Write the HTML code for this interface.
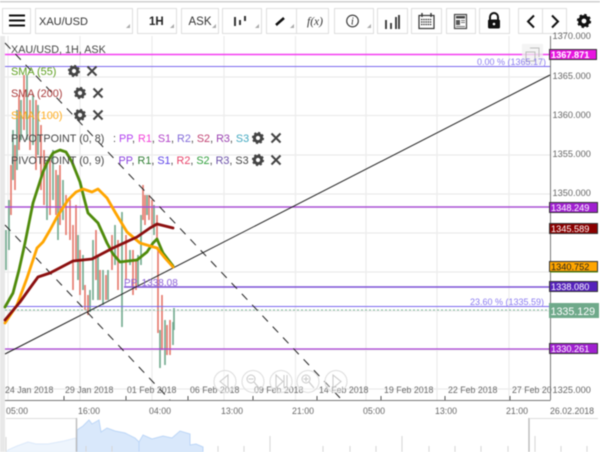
<!DOCTYPE html>
<html><head><meta charset="utf-8"><style>
html,body{margin:0;padding:0;background:#fff;width:600px;height:452px;overflow:hidden}
svg{display:block;font-family:"Liberation Sans",sans-serif;filter:blur(.4px)}
</style></head><body>
<svg width="600" height="452" viewBox="0 0 600 452" xmlns="http://www.w3.org/2000/svg">
<defs>
<g id="gear"><circle r="3.6" fill="none" stroke="#444" stroke-width="3"/><circle r="5.3" fill="none" stroke="#444" stroke-width="1.6" stroke-dasharray="2.1 2.06"/></g>
<g id="x"><path d="M-4.5-4.5L4.5 4.5M4.5-4.5L-4.5 4.5" stroke="#444" stroke-width="2" fill="none"/></g>
</defs>
<rect width="600" height="452" fill="#fff"/>
<rect x="0" y="1" width="600" height="1.5" fill="#cfcfcf"/>
<rect x="0" y="36" width="5" height="416" fill="#e8e8e8"/>

<!-- toolbar -->
<g fill="#fff" stroke="#dedede" stroke-width="1">
<rect x="2.5" y="8.5" width="28" height="25"/><rect x="35.5" y="8.5" width="97" height="25"/><rect x="137.5" y="8.5" width="39" height="25"/><rect x="181.5" y="8.5" width="37" height="25"/><rect x="222.5" y="8.5" width="39" height="25"/><rect x="266.5" y="8.5" width="30" height="25"/><rect x="296.5" y="8.5" width="32" height="25"/><rect x="334.5" y="8.5" width="39" height="25"/><rect x="377.5" y="8.5" width="30" height="25"/><rect x="411.5" y="8.5" width="30" height="25"/><rect x="446.5" y="8.5" width="29" height="25"/><rect x="479.5" y="8.5" width="30" height="25"/><rect x="518.5" y="8.5" width="48" height="25"/><path d="M542.5 8.500V33.500"/>
</g>
<g fill="#aaa"><path d="M130 28v-4l-4 4z"/><path d="M174 28v-4l-4 4z"/><path d="M216 28v-4l-4 4z"/><path d="M259 28v-4l-4 4z"/><path d="M294 28v-4l-4 4z"/><path d="M371 28v-4l-4 4z"/></g>
<path d="M9 15.500H25M9 20.500H25M9 25.500H25" stroke="#111" stroke-width="2" fill="none"/>
<text x="39" y="25" font-size="11" fill="#333">XAU/USD</text>
<text x="149" y="25" font-size="11.500" fill="#222" font-weight="bold">1H</text>
<text x="188.500" y="25" font-size="11.500" fill="#333">ASK</text>
<path d="M235 17v9M240 20v5M245 16v5" stroke="#333" stroke-width="2" fill="none"/>
<path d="M276 25l8-7" stroke="#111" stroke-width="2.500"/>
<text x="307" y="25" font-size="11.500" font-family="Liberation Serif" font-style="italic" fill="#333">f(x)</text>
<circle cx="352.500" cy="21" r="5.800" fill="none" stroke="#333" stroke-width="1.100"/><text x="351" y="24.500" font-size="10" font-family="Liberation Serif" font-style="italic" fill="#222">i</text>
<path d="M386 28v-9M391 28v-6M396 28v-12M399 28v-14" stroke="#333" stroke-width="1.800" fill="none" transform="translate(0,1)"/>
<g fill="none" stroke="#333"><rect x="419" y="15.500" width="15" height="13" stroke-width="1.200"/><path d="M422 13v4M431 13v4" stroke-width="1.400"/><path d="M421 19.500h11M421 22h11M421 24.500h11" stroke-width="1.300" stroke-dasharray="1.500 .7"/></g>
<g><rect x="454.500" y="14.500" width="12" height="14" fill="#fff" stroke="#444" stroke-width="1.200"/><rect x="456" y="16" width="9" height="2.500" fill="#444"/><rect x="456" y="20" width="4" height="5" fill="#555"/><path d="M461 20.500h4M461 22.500h4M456 26.500h9" stroke="#777"/></g>
<path d="M490 20v-3a4 4 0 0 1 8 0v3" fill="none" stroke="#111" stroke-width="2"/><rect x="488" y="19.500" width="12" height="9" rx="1.500" fill="#111"/><circle cx="494" cy="24" r="1.300" fill="#fff"/>
<path d="M534 15.500l-6 6 6 6M552 15.500l6 6-6 6" fill="none" stroke="#111" stroke-width="2"/>
<g transform="translate(584,21) scale(1.150)"><circle r="3.600" fill="none" stroke="#111" stroke-width="3"/><circle r="5.300" fill="none" stroke="#111" stroke-width="1.800" stroke-dasharray="2.100 2.060"/></g>

<!-- grid -->
<g stroke="#ececec" stroke-width="1.200" fill="none">
<path d="M8 36V400M80 36V400M152 36V400M224 36V400M295.500 36V400M366 36V400M437 36V400M509 36V400"/>
<path d="M5 77H550M5 115.500H550M5 155H550M5 194H550M5 233H550M5 272H550M5 311H550M5 350H550M5 389H550"/>
</g>

<!-- candle wicks -->
<path fill="none" stroke="#6fa88c" stroke-width="1.600" d="M6 230V270M9 200V250M13 130V180M17 110V170M21 100V140M27 75V140M33 95V145M38 105V155M47 165V220M53 150V200M58 175V240M63 180V220M78 235V280M83 255V290M90 290V312M93 240V300M98 255V300M103 270V305M108 270V300M115 225V265M122 212V327M130 250V265M138 255V285M141 215V265M147 195V215M154 205V235M160 330V368M165 320V365M173 322V345M174 308V330"/>
<path fill="none" stroke="#e4766a" stroke-width="1.600" d="M11 165V215M15 145V190M19 95V150M24 75V130M30 100V150M36 100V170M41 125V190M44 150V205M50 160V215M56 170V215M60 165V225M66 195V235M70 200V240M73 225V290M76 205V260M80 250V295M85 285V310M88 295V315M96 230V280M100 270V300M106 275V300M112 235V270M118 240V290M126 235V280M133 250V295M136 260V290M143 185V220M145 195V225M149 195V220M152 200V225M157 215V240M158 247V333M162 295V350M167 325V355M170 320V355"/>

<!-- horizontal levels -->
<path d="M5 54.500H550" stroke="#f43df0" stroke-width="1.400"/>
<path d="M5 66.500H550" stroke="#7b68ee" stroke-width="1.100"/>
<path d="M5 207H550" stroke="#a94fd4" stroke-width="1.400"/>
<path d="M124 287H550" stroke="#7a4fd6" stroke-width="1.500"/>
<path d="M5 306.500H550" stroke="#7b68ee" stroke-width="1.100"/>
<path d="M5 310H550" stroke="#7fb79a" stroke-width="1" stroke-dasharray="2 2"/>
<path d="M5 349H550" stroke="#a93fd4" stroke-width="1.200"/>

<!-- trend lines -->
<path d="M5 354L550 75" stroke="#222" stroke-width="1" fill="none"/>
<path d="M5 43L342 400" stroke="#222" stroke-width="1" stroke-dasharray="8 7" fill="none"/>
<path d="M5 225L170 400" stroke="#222" stroke-width="1" stroke-dasharray="8 7" fill="none"/>

<!-- SMAs -->
<polyline fill="none" stroke="#4f8b0b" stroke-width="2.800" stroke-linejoin="round" stroke-linecap="round" points="5,307 13,293 19,270 25,243 33,203 43,172 48,161 53,153 60,150 66,152 72,162 80,182 84,198 88,213 98,223 103,234 107,243 113,254 120,262 128,261 137,260 147,252 153,243 157,239 163,253 173,266"/>
<polyline fill="none" stroke="#ffa500" stroke-width="2.800" stroke-linejoin="round" stroke-linecap="round" points="5,323 17,305 27,278 37,248 43,242 50,230 57,217 68,200 76,192 83,189 92,192 98,189 107,198 115,212 127,232 140,243 150,246 157,248 165,258 173,267"/>
<polyline fill="none" stroke="#8b0f0f" stroke-width="2.800" stroke-linejoin="round" stroke-linecap="round" points="5,320 20,302 30,288 38,277 50,273 73,261 92,259 113,248 137,237 150,228 157,224 165,226 173,228"/>

<!-- popout icon -->
<rect x="522" y="44" width="21" height="21" fill="#f0f0f0" opacity=".75"/>
<path d="M526 52h9v9h-9zM530 48h9v9" fill="none" stroke="#bbb" stroke-width="1"/>

<!-- chart text -->
<text x="11" y="53" font-size="10.800" fill="#444">XAU/USD, 1H, ASK</text>
<text x="11" y="75" font-size="10.900" fill="#5c9e1e">SMA (55)</text>
<text x="11" y="97" font-size="10.900" fill="#a83838">SMA (200)</text>
<text x="11" y="119" font-size="10.900" fill="#ffab1a">SMA (100)</text>
<text x="11" y="142" font-size="10.800" fill="#444">PIVOTPOINT (0, 8)</text>
<text x="11" y="164" font-size="10.800" fill="#444">PIVOTPOINT (0, 9)</text>
<text x="113" y="142" font-size="10.800" fill="#444">: <tspan fill="#b03ff0">PP</tspan>, <tspan fill="#f23fd8">R1</tspan>, <tspan fill="#b03fc8">S1</tspan>, <tspan fill="#8068d8">R2</tspan>, <tspan fill="#c04070">S2</tspan>, <tspan fill="#9a40b0">R3</tspan>, <tspan fill="#40a8c0">S3</tspan></text>
<text x="118.500" y="164" font-size="10.800" fill="#444"><tspan fill="#8a40e0">PP</tspan>, <tspan fill="#2e7d32">R1</tspan>, <tspan fill="#5a40e8">S1</tspan>, <tspan fill="#e84068">R2</tspan>, <tspan fill="#2e9e3a">S2</tspan>, <tspan fill="#6a50a8">R3</tspan>, <tspan fill="#444">S3</tspan></text>
<use href="#gear" x="74" y="71"/><use href="#x" x="92" y="71"/>
<use href="#gear" x="80" y="93"/><use href="#x" x="98" y="93"/>
<use href="#gear" x="80" y="115"/><use href="#x" x="98" y="115"/>
<use href="#gear" x="258" y="138"/><use href="#x" x="276" y="138"/>
<use href="#gear" x="258" y="160"/><use href="#x" x="276" y="160"/>
<text x="124" y="286" font-size="10" fill="#8a5fd8">PP, 1338.08</text>
<text x="477" y="65" font-size="9" fill="#8a7af0">0.00 % (1365.17)</text>
<text x="470" y="305" font-size="9" fill="#8a7af0">23.60 % (1335.59)</text>

<!-- axes -->
<path d="M550.500 36V400M5 400.500H550.500" stroke="#777" stroke-width="1" fill="none"/>
<g font-size="9.200" fill="#666">
<text x="552.500" y="39">1370.000</text><text x="552.500" y="79">1365.000</text><text x="552.500" y="118">1360.000</text><text x="552.500" y="157">1355.000</text><text x="552.500" y="196">1350.000</text><text x="552.500" y="393">1325.000</text>
</g>
<g font-size="8.800" fill="#666">
<text x="5" y="393">24 Jan 2018</text><text x="65" y="393">29 Jan 2018</text><text x="127" y="393">01 Feb 2018</text><text x="190" y="393">06 Feb 2018</text><text x="254" y="393">09 Feb 2018</text><text x="319" y="393">14 Feb 2018</text><text x="384" y="393">19 Feb 2018</text><text x="448" y="393">22 Feb 2018</text><text x="512" y="393">27 Feb 20</text>
<text x="6" y="414">05:00</text><text x="78" y="414">16:00</text><text x="149" y="414">04:00</text><text x="221" y="414">13:00</text><text x="292" y="414">21:00</text><text x="363" y="414">05:00</text><text x="435" y="414">13:00</text><text x="506" y="414">21:00</text><text x="550" y="414">26.02.2018</text>
</g>
<path d="M64 400V396M126 400V396M188 400V396M253 400V396M317 400V396M381 400V396M445 400V396M510 400V396" stroke="#555" stroke-width="1"/>

<!-- level labels -->
<g stroke="#333" stroke-width="1">
<rect x="549.500" y="49.500" width="47" height="10" fill="#e815e0"/>
<rect x="549.500" y="202.500" width="48" height="10" fill="#a020d0"/>
<rect x="549.500" y="223.500" width="48" height="10" fill="#8b0000"/>
<rect x="549.500" y="261.500" width="48" height="10" fill="#ffa500"/>
<rect x="549.500" y="281.500" width="48" height="10" fill="#5522bb"/>
<rect x="549.500" y="343.500" width="48" height="10" fill="#a020d0"/>
</g>
<rect x="549" y="303" width="50" height="15" fill="#6fa98a"/>
<path d="M550 272H598" stroke="#4f8b0b" stroke-width="1"/>
<g font-size="9.200" fill="#fff">
<text x="551" y="58" font-weight="bold">1367.871</text>
<text x="551" y="211">1348.249</text>
<text x="551" y="232">1345.589</text>
<text x="551" y="270" fill="#222">1340.752</text>
<text x="551" y="290">1338.080</text>
<text x="550.500" y="315" font-size="10.700">1335.129</text>
<text x="551" y="352">1330.261</text>
</g>

<!-- nav buttons -->
<g fill="rgba(255,255,255,.35)" stroke="#ddd" stroke-width="1">
<circle cx="225" cy="381.500" r="11"/><circle cx="253" cy="381.500" r="11"/><circle cx="281" cy="381.500" r="11"/><circle cx="308" cy="381.500" r="11"/><circle cx="336" cy="381.500" r="11"/>
</g>
<g fill="none" stroke="#c8c8c8" stroke-width="1">
<path d="M228 375l-8 6.500 8 6.500z"/>
<circle cx="251" cy="379" r="4"/><path d="M248.500 379h5M254 382l5 6"/>
<path d="M276 375l7 6.500-7 6.500zM284 375v13M287 375v13"/>
<circle cx="306" cy="379" r="4"/><path d="M303.500 379h5M306 376.500v5M309 382l5 6"/>
<path d="M333 375l8 6.500-8 6.500z"/>
</g>

<!-- navigator -->
<path d="M7 452L8 450L17 446L28 442L36 444L48 444L64 441L76 438V452Z" fill="#eef5fd" stroke="#dce9fa"/>
<path d="M77 452V430L83 426L89 420L92 424L99 420L101 432L107 428L115 431L125 433L135 438L139 442V452Z" fill="#d9e8fb" stroke="#bcd6f7"/>
<path d="M139 452V442L143 435L152 439L163 436L172 438L180 431L190 434V445L196 444L203 447V452Z" fill="#d9e8fb" stroke="#bcd6f7"/>
<path d="M6 418.500H76M530 418.500H598" stroke="#ddd" fill="none"/>
<path d="M76.500 418V452M529 418V452" stroke="#bbb" stroke-width="1.400" fill="none"/>
<path d="M6 437V452M86 446V452M112 446V452M218 446V452M244 446V452M270 436V452M323 446V452M350 446V452M376 446V452M402 436V452M429 446V452M455 446V452M481 446V452M508 446V452M535 436V452M561 446V452M587 446V452" stroke="#d5d5d5" fill="none"/>
</svg>
</body></html>
